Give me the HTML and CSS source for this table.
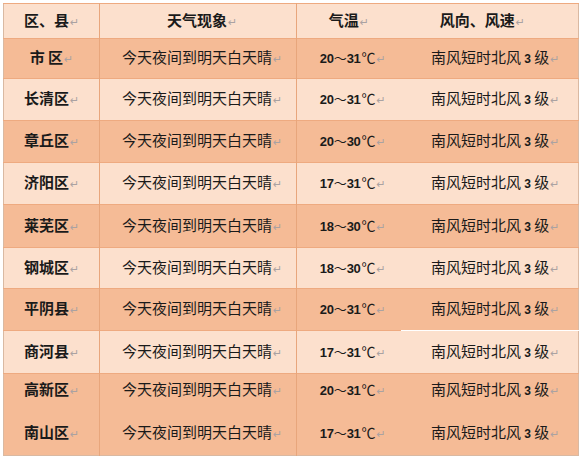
FILE: index.html
```html
<!DOCTYPE html>
<html lang="zh">
<head>
<meta charset="utf-8">
<link rel="stylesheet" href="styles.css">
</head>
<body>
<div class="page">
<table class="wx">
  <colgroup>
    <col class="c-area"><col class="c-desc"><col class="c-temp"><col class="c-wind">
  </colgroup>
  <thead>
    <tr class="light head">
      <th class="area">区、县<span class="pm">↵</span></th>
      <th class="desc">天气现象<span class="pm">↵</span></th>
      <th class="temp">气温<span class="pm">↵</span></th>
      <th class="wind">风向、风速<span class="pm">↵</span></th>
    </tr>
  </thead>
  <tbody>
    <tr class="orange h40"><td class="area">市 区<span class="pm">↵</span></td><td class="desc">今天夜间到明天白天晴<span class="pm">↵</span></td><td class="temp"><b>20</b>～<b>31</b><span class="deg">℃</span><span class="pm">↵</span></td><td class="wind">南风短时北风 <b>3</b> 级<span class="pm">↵</span></td></tr>
    <tr class="light h42"><td class="area">长清区<span class="pm">↵</span></td><td class="desc">今天夜间到明天白天晴<span class="pm">↵</span></td><td class="temp"><b>20</b>～<b>31</b><span class="deg">℃</span><span class="pm">↵</span></td><td class="wind">南风短时北风 <b>3</b> 级<span class="pm">↵</span></td></tr>
    <tr class="orange h42"><td class="area">章丘区<span class="pm">↵</span></td><td class="desc">今天夜间到明天白天晴<span class="pm">↵</span></td><td class="temp"><b>20</b>～<b>30</b><span class="deg">℃</span><span class="pm">↵</span></td><td class="wind">南风短时北风 <b>3</b> 级<span class="pm">↵</span></td></tr>
    <tr class="light h42"><td class="area">济阳区<span class="pm">↵</span></td><td class="desc">今天夜间到明天白天晴<span class="pm">↵</span></td><td class="temp"><b>17</b>～<b>31</b><span class="deg">℃</span><span class="pm">↵</span></td><td class="wind">南风短时北风 <b>3</b> 级<span class="pm">↵</span></td></tr>
    <tr class="orange h43"><td class="area">莱芜区<span class="pm">↵</span></td><td class="desc">今天夜间到明天白天晴<span class="pm">↵</span></td><td class="temp"><b>18</b>～<b>30</b><span class="deg">℃</span><span class="pm">↵</span></td><td class="wind">南风短时北风 <b>3</b> 级<span class="pm">↵</span></td></tr>
    <tr class="light h41"><td class="area">钢城区<span class="pm">↵</span></td><td class="desc">今天夜间到明天白天晴<span class="pm">↵</span></td><td class="temp"><b>18</b>～<b>30</b><span class="deg">℃</span><span class="pm">↵</span></td><td class="wind">南风短时北风 <b>3</b> 级<span class="pm">↵</span></td></tr>
    <tr class="orange h42 cut"><td class="area">平阴县<span class="pm">↵</span></td><td class="desc">今天夜间到明天白天晴<span class="pm">↵</span></td><td class="temp"><b>20</b>～<b>31</b><span class="deg">℃</span><span class="pm">↵</span></td><td class="wind">南风短时北风 <b>3</b> 级<span class="pm">↵</span></td></tr>
    <tr class="light h43"><td class="area">商河县<span class="pm">↵</span></td><td class="desc">今天夜间到明天白天晴<span class="pm">↵</span></td><td class="temp"><b>17</b>～<b>31</b><span class="deg">℃</span><span class="pm">↵</span></td><td class="wind">南风短时北风 <b>3</b> 级<span class="pm">↵</span></td></tr>
    <tr class="orange h33"><td class="area">高新区<span class="pm">↵</span></td><td class="desc">今天夜间到明天白天晴<span class="pm">↵</span></td><td class="temp"><b>20</b>～<b>31</b><span class="deg">℃</span><span class="pm">↵</span></td><td class="wind">南风短时北风 <b>3</b> 级<span class="pm">↵</span></td></tr>
    <tr class="orange h49 joined"><td class="area">南山区<span class="pm">↵</span></td><td class="desc">今天夜间到明天白天晴<span class="pm">↵</span></td><td class="temp"><b>17</b>～<b>31</b><span class="deg">℃</span><span class="pm">↵</span></td><td class="wind">南风短时北风 <b>3</b> 级<span class="pm">↵</span></td></tr>
  </tbody>
</table>
</div>
</body>
</html>
```
FILE: styles.css
```css
html, body {
  margin: 0;
  padding: 0;
  background: #ffffff;
}
.page {
  padding: 3px 2px 0 3px;
}
.wx {
  border-collapse: collapse;
  table-layout: fixed;
  width: 575px;
  border: 1px solid #d9b9a2;
  font-family: "Noto Sans CJK SC", "DejaVu Sans", sans-serif;
  font-size: 15px;
  color: #1a1a1a;
}
.c-area { width: 96px; }
.c-desc { width: 197px; }
.c-temp { width: 104px; }
.c-wind { width: 178px; }

.wx th, .wx td {
  padding: 0;
  text-align: center;
  vertical-align: middle;
  white-space: nowrap;
  line-height: 18px;
}
.wx tr { border-top: 1px solid #eeaa80; }
.wx tr.joined { border-top: none; }
.wx tr.head { height: 35px; }
.h33 { height: 33px; }
.h40 { height: 40px; }
.h41 { height: 41px; }
.h42 { height: 42px; }
.h43 { height: 43px; }
.h49 { height: 49px; }

.light { background: #fce0cd; }
.orange { background: #f5bb96; }

.area { border-right: 1px solid #e8a67c; font-weight: 700; }
.desc { border-right: 1px solid #e8a67c; }
.desc { padding-left: 8px !important; }
.wx th { font-weight: 700; }

.temp {
  font-family: "Noto Sans CJK SC", sans-serif;
  font-size: 13px;
  padding-left: 8px !important;
}
.temp b {
  font-family: "Liberation Sans", sans-serif;
  font-weight: 900;
  font-size: 13px;
  letter-spacing: -0.3px;
}
.temp .deg {
  font-family: "Noto Sans CJK SC", sans-serif;
  font-size: 14px;
  font-weight: 400;
  margin-left: 1px;
}
th.temp {
  font-size: 15px;
  padding-left: 0 !important;
}
.wind { padding-left: 12px !important; }
.wind b {
  font-family: "Liberation Sans", sans-serif;
  font-weight: 900;
  font-size: 12px;
}
th.wind { padding-left: 0 !important; padding-right: 14px !important; }

.cut .wind { border-bottom: 1px solid #ffffff; }
.joined td { padding-top: 6px !important; }

.pm {
  font-family: "DejaVu Sans", sans-serif;
  font-size: 11px;
  font-weight: 400;
  color: #aaa2a2;
  margin-left: 1px;
}
```
